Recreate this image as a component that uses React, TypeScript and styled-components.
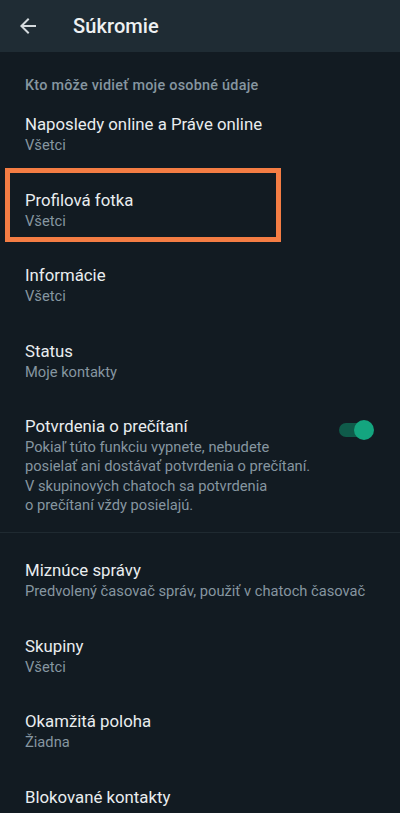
import styled, { createGlobalStyle } from "styled-components";

const GlobalStyle = createGlobalStyle`
  html, body {
    margin: 0;
    padding: 0;
    background: #121b22;
  }
  body {
    font-family: Roboto, "Noto Sans", "Liberation Sans", sans-serif;
    -webkit-font-smoothing: antialiased;
  }
`;

const Screen = styled.div`
  width: 400px;
  height: 813px;
  overflow: hidden;
  background: #121b22;
  color: #e9edef;
`;

const Header = styled.header`
  height: 52px;
  display: flex;
  align-items: center;
  background: #1f2c34;
  padding-left: 16px;
`;

const BackButton = styled.button`
  width: 24px;
  height: 24px;
  padding: 0;
  border: none;
  background: none;
  color: #d4dadd;
  display: flex;
  align-items: center;
  justify-content: center;
  svg {
    display: block;
  }
`;

const Title = styled.h1`
  margin: 0 0 0 33px;
  font-size: 20px;
  font-weight: 500;
  color: #eef1f2;
  letter-spacing: 0.1px;
`;

const SectionLabel = styled.div`
  padding: 24px 25px 0;
  line-height: 20px;
  font-size: 14.4px;
  font-weight: 500;
  letter-spacing: 0.25px;
  color: #8696a0;
`;

const Group = styled.section<{ $padTop?: number }>`
  padding-top: ${(p) => p.$padTop ?? 0}px;
`;

const Row = styled.div`
  position: relative;
  display: flex;
  align-items: flex-start;
  padding: 17px 25px 16.5px;
`;

const RowText = styled.div`
  flex: 1;
  min-width: 0;
`;

const RowTitle = styled.div`
  font-size: 16.8px;
  line-height: 22px;
  color: #e9edef;
  white-space: nowrap;
`;

const RowSub = styled.div`
  font-size: 14.7px;
  line-height: 20px;
  color: #8696a0;
  white-space: nowrap;
`;

const RowDesc = styled.div`
  font-size: 14.7px;
  line-height: 19.4px;
  color: #8696a0;
  padding-top: 1px;
  white-space: nowrap;
`;

const Highlight = styled.div`
  position: absolute;
  left: 5px;
  top: -4px;
  width: 276px;
  height: 74px;
  box-sizing: border-box;
  border: 5px solid #f47d44;
  pointer-events: none;
`;

const Divider = styled.hr`
  margin: 0;
  border: none;
  height: 1px;
  background: #1f2a31;
`;

const Toggle = styled.div`
  position: relative;
  width: 33px;
  height: 14px;
  margin: 8px 3px 0 12px;
  border-radius: 7px;
  background: #0f5b4a;
  flex-shrink: 0;
`;

const Thumb = styled.span`
  position: absolute;
  right: -2px;
  top: -3px;
  width: 20px;
  height: 20px;
  border-radius: 50%;
  background: #14a57f;
`;

const ArrowBack = () => (
  <svg width="24" height="24" viewBox="0 0 24 24" fill="currentColor">
    <path d="M20 11H7.83l5.59-5.59L12 4l-8 8 8 8 1.41-1.41L7.83 13H20v-2z" />
  </svg>
);

interface Item {
  title: string;
  sub: string;
  marked?: boolean;
}

const personal: Item[] = [
  { title: "Naposledy online a Práve online", sub: "Všetci" },
  { title: "Profilová fotka", sub: "Všetci", marked: true },
  { title: "Informácie", sub: "Všetci" },
  { title: "Status", sub: "Moje kontakty" },
];

const more: Item[] = [
  {
    title: "Miznúce správy",
    sub: "Predvolený časovač správ, použiť v chatoch časovač",
  },
  { title: "Skupiny", sub: "Všetci" },
  { title: "Okamžitá poloha", sub: "Žiadna" },
  { title: "Blokované kontakty", sub: "" },
];

const App = () => {
  return (
    <Screen>
      <GlobalStyle />
      <Header>
        <BackButton aria-label="Späť">
          <ArrowBack />
        </BackButton>
        <Title>Súkromie</Title>
      </Header>
      <SectionLabel>Kto môže vidieť moje osobné údaje</SectionLabel>
      <Group>
        {personal.map((item) => (
          <Row key={item.title}>
            <RowText>
              <RowTitle>{item.title}</RowTitle>
              <RowSub>{item.sub}</RowSub>
            </RowText>
            {item.marked && <Highlight />}
          </Row>
        ))}
        <Row>
          <RowText>
            <RowTitle>Potvrdenia o prečítaní</RowTitle>
            <RowDesc>
              Pokiaľ túto funkciu vypnete, nebudete
              <br />
              posielať ani dostávať potvrdenia o prečítaní.
              <br />V skupinových chatoch sa potvrdenia
              <br />o prečítaní vždy posielajú.
            </RowDesc>
          </RowText>
          <Toggle>
            <Thumb />
          </Toggle>
        </Row>
      </Group>
      <Divider />
      <Group $padTop={9}>
        {more.map((item) => (
          <Row key={item.title}>
            <RowText>
              <RowTitle>{item.title}</RowTitle>
              {item.sub && <RowSub>{item.sub}</RowSub>}
            </RowText>
          </Row>
        ))}
      </Group>
    </Screen>
  );
};

export default App;
